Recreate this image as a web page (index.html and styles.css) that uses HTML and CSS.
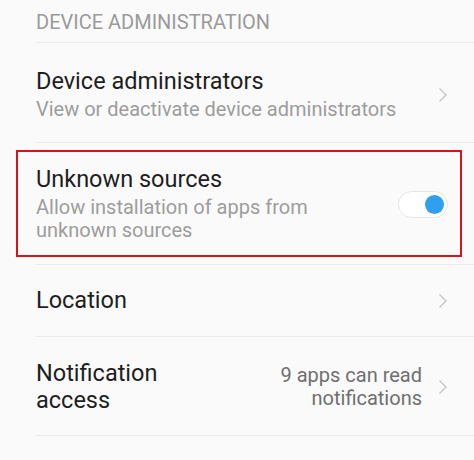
FILE: index.html
```html
<!DOCTYPE html>
<html lang="en">

<head>
    <meta charset="UTF-8">
    <meta name="viewport" content="width=device-width, initial-scale=1.0">
    <title>Settings</title>
    <link rel="stylesheet" href="styles.css">
</head>

<body>
<div class="list">
    <div class="section-title">DEVICE ADMINISTRATION</div>

    <div class="row row-admins">
        <div class="text">
            <div class="title">Device administrators</div>
            <div class="summary">View or deactivate device administrators</div>
        </div>
        <svg class="arrow" width="10" height="16" viewBox="0 0 10 16"><path d="M1.5 1.5 L8 8 L1.5 14.5" fill="none" stroke="#c4c4c4" stroke-width="1.3"/></svg>
    </div>

    <div class="row row-unknown">
        <div class="marked">
            <div class="text">
                <div class="title">Unknown sources</div>
                <div class="summary">Allow installation of apps from<br>unknown sources</div>
            </div>
            <span class="switch on"><span class="knob"></span></span>
        </div>
    </div>

    <div class="row row-location">
        <div class="text">
            <div class="title">Location</div>
        </div>
        <svg class="arrow" width="10" height="16" viewBox="0 0 10 16"><path d="M1.5 1.5 L8 8 L1.5 14.5" fill="none" stroke="#c4c4c4" stroke-width="1.3"/></svg>
    </div>

    <div class="row row-notify">
        <div class="text">
            <div class="title">Notification<br>access</div>
        </div>
        <div class="value">9 apps can read<br>notifications</div>
        <svg class="arrow" width="10" height="16" viewBox="0 0 10 16"><path d="M1.5 1.5 L8 8 L1.5 14.5" fill="none" stroke="#c4c4c4" stroke-width="1.3"/></svg>
    </div>

    <div class="row row-next"></div>
</div>
</body>

</html>
```

FILE: styles.css
```css
* {
    margin: 0;
    padding: 0;
    box-sizing: border-box;
}

html, body {
    background: #fafafa;
}

body {
    font-family: Roboto, "Noto Sans", sans-serif;
    color: #1e1e1e;
    overflow: hidden;
}

.list {
    width: 474px;
}

.section-title {
    height: 43px;
    margin-left: 36px;
    padding-top: 10px;
    font-size: 20px;
    color: #9a9a9a;
    border-bottom: 1px solid #ebebeb;
}

.row {
    display: flex;
    align-items: center;
    margin-left: 36px;
    padding-right: 26px;
    border-bottom: 1px solid #ebebeb;
}

.text {
    flex: 1;
}

.title {
    font-size: 23.5px;
    line-height: 27px;
    color: #1e1e1e;
}

.summary {
    margin-top: 3px;
    font-size: 20px;
    line-height: 23px;
    color: #9d9d9d;
}

.value {
    font-size: 20px;
    line-height: 23px;
    color: #6f6f6f;
    text-align: right;
    margin-right: 16px;
}

.arrow {
    flex: none;
    display: block;
}

.row-admins {
    height: 100px;
    padding-top: 4px;
}

.row-unknown {
    height: 122px;
    padding-right: 12px;
}

/* red frame drawn around the unknown sources entry */
.marked {
    flex: 1;
    display: flex;
    align-items: center;
    height: 107px;
    margin-left: -20px;
    padding-left: 18px;
    padding-right: 12px;
    border: 2px solid #d8131b;
}

.row-location {
    height: 72px;
}

.row-notify {
    height: 99px;
    padding-top: 2px;
}

.row-next {
    height: 30px;
    border-bottom: none;
}

.switch {
    flex: none;
    position: relative;
    width: 50px;
    height: 27px;
    border: 1px solid #e6e6e6;
    border-radius: 14px;
    background: #fff;
    margin-top: 2px;
}

.switch .knob {
    position: absolute;
    top: 3px;
    right: 3px;
    width: 19px;
    height: 19px;
    border-radius: 50%;
    background: #2f9ff0;
}
```
